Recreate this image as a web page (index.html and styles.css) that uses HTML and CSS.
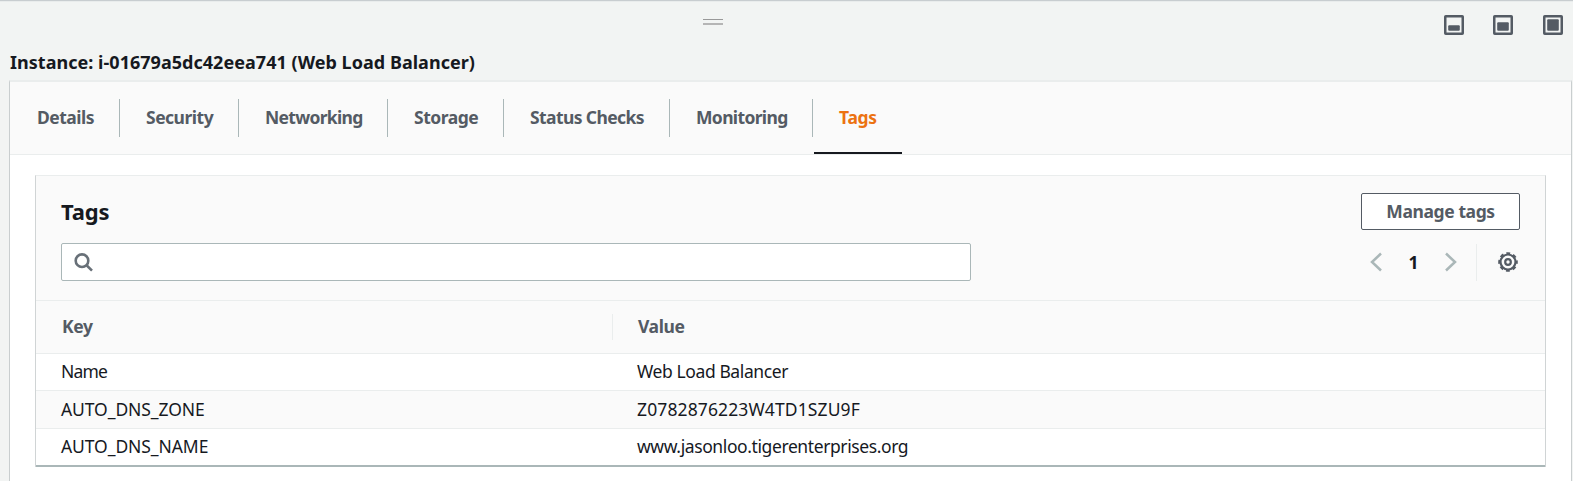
FILE: index.html
```html
<!DOCTYPE html>
<html lang="en">
<head>
<meta charset="utf-8">
<title>Instance details</title>
<link rel="stylesheet" href="styles.css">
</head>
<body>
<header class="split-header">
  <div class="toolbar">
    <div class="grip"></div>
    <div class="sizes">
      <svg width="20" height="20" viewBox="0 0 20 20"><rect class="frame" x="1.250" y="1.250" width="17.500" height="17.500" rx=".5"/><rect class="fill" x="4.200" y="10.200" width="11.600" height="5.600" rx="1"/></svg>
      <svg width="20" height="20" viewBox="0 0 20 20"><rect class="frame" x="1.250" y="1.250" width="17.500" height="17.500" rx=".5"/><rect class="fill" x="4.200" y="7.200" width="11.600" height="8.600" rx="1"/></svg>
      <svg width="20" height="20" viewBox="0 0 20 20"><rect class="frame" x="1.250" y="1.250" width="17.500" height="17.500" rx=".5"/><rect class="fill" x="4.200" y="4.200" width="11.600" height="11.600" rx="1"/></svg>
    </div>
  </div>
  <h1 class="instance">Instance: i-01679a5dc42eea741 (Web Load Balancer)</h1>
</header>
<main class="panel">
  <nav class="tabs">
    <a class="tab details">Details</a>
    <a class="tab security">Security</a>
    <a class="tab networking">Networking</a>
    <a class="tab storage">Storage</a>
    <a class="tab status">Status Checks</a>
    <a class="tab monitoring">Monitoring</a>
    <a class="tab active">Tags</a>
  </nav>
  <section class="card">
    <div class="card-head">
      <div class="title-row">
        <h2 class="title">Tags</h2>
        <button class="manage">Manage tags</button>
      </div>
      <div class="tools">
        <div class="search">
          <svg width="20" height="20" viewBox="0 0 20 20"><circle cx="8" cy="7.700" r="6.300"/><path d="M12.300 12 18 17.700"/></svg>
        </div>
        <div class="pager">
          <svg class="arrow" width="12" height="20" viewBox="0 0 12 20"><path d="M11 1.500 2 10l9 8.500"/></svg>
          <span class="page">1</span>
          <svg class="arrow" width="12" height="20" viewBox="0 0 12 20"><path d="M1 1.500 10 10l-9 8.500"/></svg>
          <span class="rule"></span>
          <svg class="gear" width="20" height="20" viewBox="0 0 20 20"><circle cx="10" cy="10" r="7.500"/><circle class="teeth" cx="10" cy="10" r="8.700"/><circle cx="10" cy="10" r="2.800"/></svg>
        </div>
      </div>
    </div>
    <div class="row head"><div class="cell">Key</div><div class="cell value">Value</div></div>
    <div class="row"><div class="cell name">Name</div><div class="cell">Web Load Balancer</div></div>
    <div class="row alt"><div class="cell caps">AUTO_DNS_ZONE</div><div class="cell zone">Z0782876223W4TD1SZU9F</div></div>
    <div class="row last"><div class="cell caps">AUTO_DNS_NAME</div><div class="cell">www.jasonloo.tigerenterprises.org</div></div>
  </section>
</main>
</body>
</html>
```
FILE: styles.css
```css
* { box-sizing: border-box; }
body {
  margin: 0;
  height: 481px;
  overflow: hidden;
  display: flex;
  flex-direction: column;
  background: #f2f4f3;
  color: #16191f;
  font: 17.5px/24px "Noto Sans", "Open Sans", sans-serif;
}
svg { display: block; flex: none; fill: none; }
.split-header {
  height: 80px;
  flex: none;
  border-top: 1px solid #c8cdd0;
  box-shadow: inset 0 1px #e9ecec;
}
.toolbar {
  display: grid;
  grid-template-columns: 703px 20px 1fr;
  padding-right: 10px;
  height: 47px;
}
.grip {
  grid-column: 2;
  height: 6px;
  margin-top: 18px;
  border-top: 1px solid #999;
  border-bottom: 2px solid #b5b5b5;
}
.sizes { display: flex; justify-content: flex-end; gap: 30px; padding-top: 14px; }
.sizes svg:first-child { margin-right: -1px; }
.frame { stroke: #545b64; stroke-width: 2.5; }
.fill { fill: #545b64; }
.instance {
  margin: 0 0 0 10px;
  font-size: 18px;
  line-height: 28px;
  font-weight: 700;
  white-space: nowrap;
  letter-spacing: .03px;
}
.panel {
  flex: 1;
  margin: 0 1px 0 9px;
  background: #fff;
  border: 1px solid #c9cecf;
  border-top: 2px solid #eaeded;
  border-bottom: 0;
}
.tabs {
  display: flex;
  height: 73px;
  background: #fafafa;
  border-bottom: 1px solid #eaeded;
}
.tab {
  height: 38px;
  margin-top: 17px;
  padding: 6px 0 0 26px;
  border-right: 1px solid #aab7b8;
  color: #545b64;
  font-weight: 700;
  white-space: nowrap;
  letter-spacing: -.5px;
}
.details { width: 110px; padding-left: 27px; }
.security { width: 119px; }
.networking { width: 149px; letter-spacing: -.7px; }
.storage { width: 116px; }
.status { width: 166px; letter-spacing: -.6px; }
.monitoring { width: 143px; letter-spacing: -.65px; }
.active {
  width: 88px;
  height: 55px;
  margin-left: 1px;
  padding-left: 25px;
  border-right: 0;
  border-bottom: 2px solid #16191f;
  color: #ec7211;
  letter-spacing: -.3px;
}
.card {
  margin: 20px 25px 0;
  border: 1px solid #d0d4d5;
  border-top-color: #eaeded;
  border-bottom: 0;
}
.card-head {
  height: 125px;
  padding: 17px 25px 0;
  background: #fafafa;
  border-bottom: 1px solid #eaeded;
}
.title-row { display: flex; justify-content: space-between; }
.title { margin: 3px 0 0; font-size: 22px; line-height: 30px; letter-spacing: -.2px; }
.manage {
  width: 159px;
  height: 37px;
  padding: 0 0 2px;
  border: 1px solid #545b64;
  border-radius: 2px;
  background: #fff;
  color: #545b64;
  font: inherit;
  font-weight: 700;
  letter-spacing: -.4px;
}
.tools { display: flex; justify-content: space-between; margin-top: 13px; }
.search {
  width: 910px;
  height: 38px;
  padding: 9px 12px;
  border: 1px solid #aab7b8;
  border-radius: 2px;
  background: #fff;
}
.search svg { stroke: #687078; stroke-width: 2.6; }
.pager { display: flex; align-items: center; padding-right: 2px; }
.arrow { stroke: #aab7b8; stroke-width: 2.5; }
.page { width: 63px; text-align: center; font-weight: 700; }
.rule { width: 1px; height: 37px; margin: 0 21px 0 19px; background: #eaeded; }
.gear { stroke: #545b64; stroke-width: 2.2; }
.teeth { stroke-dasharray: 3.8 3.033; stroke-dashoffset: 1.9; }
.row { display: flex; height: 37px; border-bottom: 1px solid #eaeded; line-height: 35px; }
.cell { padding-left: 25px; white-space: nowrap; letter-spacing: -.4px; }
.cell:first-child { width: 576px; }
.name { letter-spacing: -.8px; }
.caps { letter-spacing: -.08px; }
.zone { letter-spacing: .12px; }
.head { height: 53px; align-items: center; background: #fafafa; color: #545b64; font-weight: 700; }
.head .cell { padding-left: 26px; line-height: 24px; padding-bottom: 2px; }
.head .cell:first-child { width: 577px; border-right: 1px solid #eaeded; }
.head .value { padding-left: 25px; }
.alt { height: 38px; background: #fafafa; line-height: 36px; }
.last { height: 38px; border-bottom: 2px solid #aab7b8; }
```
